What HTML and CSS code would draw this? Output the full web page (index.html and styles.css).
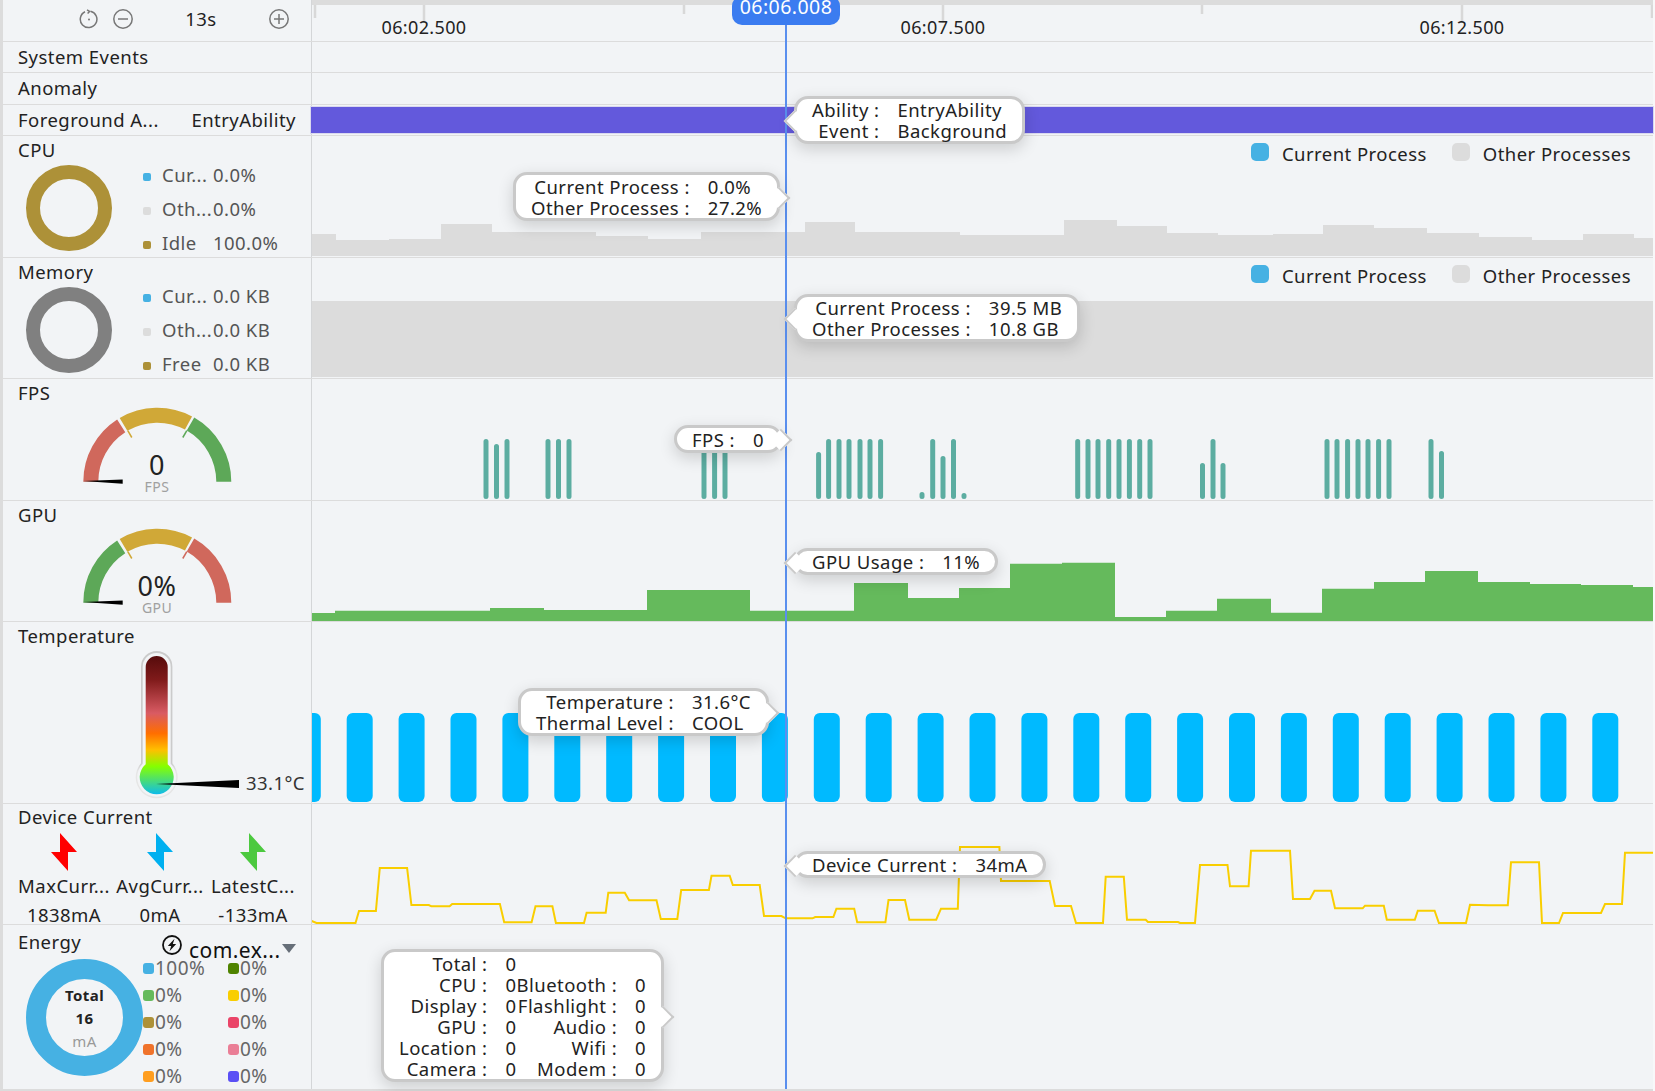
FILE: index.html
```html
<!DOCTYPE html>
<html lang="en">
<head>
    <meta charset="UTF-8">
    <title>Profiler timeline</title>
    <link rel="stylesheet" href="styles.css">
</head>
<body>
    <div class="app">
        <!-- time ruler -->
        <div class="row row-head">
            <div class="label zoom-bar">
                <svg class="zoom-icon" viewBox="0 0 20 20"><path d="M11.5 2.2A8.3 8.3 0 1 1 6 2.8"/><path d="M8 0.8L10.6 2.4L8.6 4.6"/><circle class="dot" cx="10" cy="10.5" r="1"/></svg>
                <svg class="zoom-icon zoom-minus" viewBox="0 0 20 20"><circle cx="10" cy="10" r="9.2"/><path d="M5 10H15"/></svg>
                <span class="zoom-value">13s</span>
                <svg class="zoom-icon" viewBox="0 0 20 20"><circle cx="10" cy="10" r="9.2"/><path d="M5 10H15M10 5V15"/></svg>
            </div>
            <div class="track ruler">
                <svg class="chart" viewBox="312 5 1341 36">
                    <path class="ticks" d="M315 5V18M424 5V23M684 5V14M943 5V23M1202 5V14M1462 5V23M1652 5V18"/>
                    <text class="time" x="424" y="34">06:02.500</text>
                    <text class="time" x="943" y="34">06:07.500</text>
                    <text class="time" x="1462" y="34">06:12.500</text>
                </svg>
            </div>
        </div>

        <div class="row row-sys">
            <div class="label label-line">System Events</div>
            <div class="track"></div>
        </div>

        <div class="row row-anomaly">
            <div class="label label-line">Anomaly</div>
            <div class="track"></div>
        </div>

        <div class="row row-fg">
            <div class="label label-line label-split"><span>Foreground A...</span><span>EntryAbility</span></div>
            <div class="track">
                <div class="fg-bar"></div>
                <div class="tip tip-left tip-ability">
                    <span>Ability :</span><span>EntryAbility</span>
                    <span>Event :</span><span>Background</span>
                </div>
            </div>
        </div>

        <div class="row row-cpu">
            <div class="label label-usage">
                <div class="title">CPU</div>
                <div class="donut donut-idle"></div>
                <ul class="usage">
                    <li><i class="sq c-blue"></i><span class="usage-name">Cur...</span><span>0.0%</span></li>
                    <li><i class="sq c-grey"></i><span class="usage-name">Oth...</span><span>0.0%</span></li>
                    <li><i class="sq c-olive"></i><span class="usage-name">Idle</span><span>100.0%</span></li>
                </ul>
            </div>
            <div class="track">
                <svg class="chart" viewBox="312 136 1341 121">
                    <path class="area-grey" d="M312 256V234H336V240H389V239H441V224H492V232H596V236H648V239H701V232H805V222H855V232H960V235H1064V220H1117V226H1167V233H1218V235H1273V234H1323V225H1374V228H1427V233H1479V237H1532V240H1583V234H1634V238H1653V256Z"/>
                </svg>
                <div class="legend">
                    <span class="legend-item"><i class="c-blue"></i>Current Process</span>
                    <span class="legend-item"><i class="c-grey"></i>Other Processes</span>
                </div>
                <div class="tip tip-right tip-cpu">
                    <span>Current Process :</span><span>0.0%</span>
                    <span>Other Processes :</span><span>27.2%</span>
                </div>
            </div>
        </div>

        <div class="row row-mem">
            <div class="label label-usage">
                <div class="title">Memory</div>
                <div class="donut donut-mem"></div>
                <ul class="usage">
                    <li><i class="sq c-blue"></i><span class="usage-name">Cur...</span><span>0.0 KB</span></li>
                    <li><i class="sq c-grey"></i><span class="usage-name">Oth...</span><span>0.0 KB</span></li>
                    <li><i class="sq c-olive"></i><span class="usage-name">Free</span><span>0.0 KB</span></li>
                </ul>
            </div>
            <div class="track">
                <svg class="chart" viewBox="312 258 1341 120">
                    <path class="area-grey" d="M312 301H1653V377H312Z"/>
                </svg>
                <div class="legend">
                    <span class="legend-item"><i class="c-blue"></i>Current Process</span>
                    <span class="legend-item"><i class="c-grey"></i>Other Processes</span>
                </div>
                <div class="tip tip-left tip-mem">
                    <span>Current Process :</span><span>39.5 MB</span>
                    <span>Other Processes :</span><span>10.8 GB</span>
                </div>
            </div>
        </div>

        <div class="row row-fps">
            <div class="label label-stack">
                <svg class="chart" viewBox="3 379 308 121">
                    <path class="arc a-red" d="M90.8 481.7A66.5 66.5 0 0 1 121.2 425.9"/>
                    <path class="arc a-yellow" d="M123.5 424.4A66.5 66.5 0 0 1 188.5 423"/>
                    <path class="arc a-green" d="M190.5 424.1A66.5 66.5 0 0 1 223.8 481.7"/>
                    <path class="gauge-tick a-yellow" d="M127.8 430.6L131.8 437.5"/>
                    <path class="gauge-tick a-green" d="M186.8 430.6L182.8 437.5"/>
                    <polygon class="needle" points="83,481 122.7,479.5 122.7,483.7"/>
                    <text class="gauge-value" x="157" y="475">0</text>
                    <text class="gauge-unit" x="157" y="492">FPS</text>
                </svg>
                <div class="title">FPS</div>
            </div>
            <div class="track">
                <svg class="chart" viewBox="312 379 1341 121">
                    <path class="fps-bars" d="M486 496.5V441.5M496.5 496.5V446.5M507 496.5V441.5M548 496.5V441.5M558.5 496.5V441.5M569 496.5V441.5M704 496.5V441.5M714.6 496.5V441.5M725 496.5V441.5M818.6 496.5V454.5M828.6 496.5V441.5M839 496.5V441.5M849 496.5V441.5M860 496.5V441.5M870 496.5V441.5M880.6 496.5V441.5M922 496.5V494.5M932.7 496.5V441.5M943 496.5V458.5M953.5 496.5V441.5M964 496.5V495.5M1077.7 496.5V441.5M1088 496.5V441.5M1098 496.5V441.5M1108.7 496.5V441.5M1119 496.5V441.5M1129.4 496.5V441.5M1139.7 496.5V441.5M1150 496.5V441.5M1202.5 496.5V465.5M1213 496.5V441.5M1223 496.5V465.5M1327 496.5V441.5M1337 496.5V441.5M1347.6 496.5V441.5M1358 496.5V441.5M1368 496.5V441.5M1378.6 496.5V441.5M1389 496.5V441.5M1431 496.5V441.5M1441.5 496.5V453.5"/>
                </svg>
                <div class="tip tip-right tip-fps">
                    <span>FPS :</span><span>0</span>
                </div>
            </div>
        </div>

        <div class="row row-gpu">
            <div class="label label-stack">
                <svg class="chart" viewBox="3 380 308 120">
                    <path class="arc a-green" d="M90.8 481.7A66.5 66.5 0 0 1 121.2 425.9"/>
                    <path class="arc a-yellow" d="M123.5 424.4A66.5 66.5 0 0 1 188.5 423"/>
                    <path class="arc a-red" d="M190.5 424.1A66.5 66.5 0 0 1 223.8 481.7"/>
                    <path class="gauge-tick a-yellow" d="M127.8 430.6L131.8 437.5"/>
                    <path class="gauge-tick a-red" d="M186.8 430.6L182.8 437.5"/>
                    <polygon class="needle" points="83,481 122.7,479.5 122.7,483.7"/>
                    <text class="gauge-value" x="157" y="475">0%</text>
                    <text class="gauge-unit" x="157" y="492">GPU</text>
                </svg>
                <div class="title">GPU</div>
            </div>
            <div class="track">
                <svg class="chart" viewBox="312 501 1341 120">
                    <path class="area-green" d="M312 621V613H335V610.7H490V608H544V610H647V590H750V610.7H854V583H908V598H959V588H1010V563.7H1062V562.7H1115V617H1166V610.7H1217V598.7H1271V612.7H1322V588.7H1374V582H1425V571H1478V582H1530V584H1581V585H1633V587H1653V621Z"/>
                </svg>
                <div class="tip tip-left tip-gpu">
                    <span>GPU Usage :</span><span>11%</span>
                </div>
            </div>
        </div>

        <div class="row row-temp">
            <div class="label label-stack">
                <svg class="chart" viewBox="3 622 308 181">
                    <defs>
                        <linearGradient id="thermoFill" gradientUnits="userSpaceOnUse" x1="0" y1="656" x2="0" y2="794">
                            <stop offset="0" stop-color="#560c0c"/>
                            <stop offset="0.17" stop-color="#7f1a1a"/>
                            <stop offset="0.415" stop-color="#d95b63"/>
                            <stop offset="0.56" stop-color="#ff6e00"/>
                            <stop offset="0.68" stop-color="#ffbf00"/>
                            <stop offset="0.8" stop-color="#85ff00"/>
                            <stop offset="1" stop-color="#0fbce8"/>
                        </linearGradient>
                        <linearGradient id="thermoEdge" gradientUnits="userSpaceOnUse" x1="0" y1="651" x2="0" y2="798">
                            <stop offset="0.76" stop-color="#cbcbcb"/>
                            <stop offset="0.82" stop-color="#e6e6e6"/>
                        </linearGradient>
                    </defs>
                    <path fill="url(#thermoEdge)" d="M141 763.3V666.7A15.7 15.7 0 0 1 172.4 666.7V763.3A21 21 0 1 1 141 763.3Z"/>
                    <path class="thermo-gap" d="M142.7 763.7V667A14 14 0 0 1 170.7 667V763.7A19.5 19.5 0 1 1 142.7 763.7Z"/>
                    <path fill="url(#thermoFill)" d="M145.7 764.3V667A11 11 0 0 1 167.7 667V764.3A17 17 0 1 1 145.7 764.3Z"/>
                    <polygon class="needle" points="156,784 239,780 239,788"/>
                    <text class="thermo-value" x="246" y="790">33.1°C</text>
                </svg>
                <div class="title">Temperature</div>
            </div>
            <div class="track">
                <svg class="chart" viewBox="312 622 1341 181">
                    <g class="temp-bars">
                        <rect x="294.8" y="713" width="26" height="89" rx="6"/>
                        <rect x="346.7" y="713" width="26" height="89" rx="6"/>
                        <rect x="398.6" y="713" width="26" height="89" rx="6"/>
                        <rect x="450.5" y="713" width="26" height="89" rx="6"/>
                        <rect x="502.4" y="713" width="26" height="89" rx="6"/>
                        <rect x="554.3" y="713" width="26" height="89" rx="6"/>
                        <rect x="606.2" y="713" width="26" height="89" rx="6"/>
                        <rect x="658.1" y="713" width="26" height="89" rx="6"/>
                        <rect x="710" y="713" width="26" height="89" rx="6"/>
                        <rect x="761.9" y="713" width="26" height="89" rx="6"/>
                        <rect x="813.8" y="713" width="26" height="89" rx="6"/>
                        <rect x="865.7" y="713" width="26" height="89" rx="6"/>
                        <rect x="917.6" y="713" width="26" height="89" rx="6"/>
                        <rect x="969.5" y="713" width="26" height="89" rx="6"/>
                        <rect x="1021.4" y="713" width="26" height="89" rx="6"/>
                        <rect x="1073.3" y="713" width="26" height="89" rx="6"/>
                        <rect x="1125.2" y="713" width="26" height="89" rx="6"/>
                        <rect x="1177.1" y="713" width="26" height="89" rx="6"/>
                        <rect x="1229" y="713" width="26" height="89" rx="6"/>
                        <rect x="1280.9" y="713" width="26" height="89" rx="6"/>
                        <rect x="1332.8" y="713" width="26" height="89" rx="6"/>
                        <rect x="1384.7" y="713" width="26" height="89" rx="6"/>
                        <rect x="1436.6" y="713" width="26" height="89" rx="6"/>
                        <rect x="1488.5" y="713" width="26" height="89" rx="6"/>
                        <rect x="1540.4" y="713" width="26" height="89" rx="6"/>
                        <rect x="1592.3" y="713" width="26" height="89" rx="6"/>
                    </g>
                </svg>
                <div class="tip tip-right tip-temp">
                    <span>Temperature :</span><span>31.6°C</span>
                    <span>Thermal Level :</span><span>COOL</span>
                </div>
            </div>
        </div>

        <div class="row row-current">
            <div class="label label-current">
                <div class="title">Device Current</div>
                <div class="current-cols">
                    <div class="current-col">
                        <svg class="bolt bolt-red" viewBox="0 0 26 38"><path d="M9 0L26 19H17V38L0 19H9Z"/></svg>
                        <span>MaxCurr...</span><span>1838mA</span>
                    </div>
                    <div class="current-col">
                        <svg class="bolt bolt-blue" viewBox="0 0 26 38"><path d="M9 0L26 19H17V38L0 19H9Z"/></svg>
                        <span>AvgCurr...</span><span>0mA</span>
                    </div>
                    <div class="current-col current-col-last">
                        <svg class="bolt bolt-green" viewBox="0 0 26 38"><path d="M9 0L26 19H17V38L0 19H9Z"/></svg>
                        <span>LatestC...</span><span>-133mA</span>
                    </div>
                </div>
            </div>
            <div class="track">
                <svg class="chart" viewBox="312 804 1341 120">
                    <path class="current-line" d="M310.8 920.7L316.5 923H355.5L359 911H375.9L379.8 868H407.1L411.4 905H428.8L431.4 906.3H449.6L452.2 904H499.9L504.2 922.3H531.6L535.5 906.3H552.4L555.9 923H584L586.6 912.7H605.7L608.3 892.7H624.8L629.1 900.3H656.5L660.8 919H677.3L681.2 890H708.9L711.5 875.7H729.7L732.8 885H759.7L764 916H781.4L785.7 918.3H812.6L815.2 917H833.4L836.4 908.7H854.2L857.2 922.3H885.4L888.5 900H905L909.3 919.7H936.2L941 908.7H957.8L960 847H999.4L1001 881H1049.7L1055 906H1071L1076 923H1103L1105.7 876.7H1123.8L1127 919.7H1145.7L1148 922H1178L1180 923H1195L1200 865H1227.5L1230 886.3H1248.6L1251 850.7H1290L1293 899H1310L1314.5 890.7H1331L1335 908.3H1362.7L1365 905.7H1383.8L1386.8 919.7H1414.8L1417.8 910.7H1434.6L1438.9 923H1466L1470 904.7L1488 905.3H1507.8L1511 862.3H1539L1542 923H1559L1563 913H1601L1605 904H1622L1625 852.7H1653"/>
                </svg>
                <div class="tip tip-left tip-current">
                    <span>Device Current :</span><span>34mA</span>
                </div>
            </div>
        </div>

        <div class="row row-energy">
            <div class="label label-energy">
                <div class="title">Energy</div>
                <div class="app-pick">
                    <svg class="pick-icon" viewBox="0 0 20 20"><circle cx="10" cy="10" r="9"/><path class="pick-bolt" d="M12.5 3.8L5.8 11H9.2L7.5 16.2L14.2 9H10.8Z"/></svg>
                    <span class="pick-name">com.ex...</span>
                    <i class="pick-caret"></i>
                </div>
                <div class="donut donut-energy">
                    <b>Total</b>
                    <b>16</b>
                    <span>mA</span>
                </div>
                <ul class="energy-list">
                    <li><i class="c-blue"></i>100%</li>
                    <li><i class="c-moss"></i>0%</li>
                    <li><i class="c-green"></i>0%</li>
                    <li><i class="c-yellow"></i>0%</li>
                    <li><i class="c-olive"></i>0%</li>
                    <li><i class="c-rose"></i>0%</li>
                    <li><i class="c-orange"></i>0%</li>
                    <li><i class="c-pink"></i>0%</li>
                    <li><i class="c-amber"></i>0%</li>
                    <li><i class="c-violet"></i>0%</li>
                </ul>
            </div>
            <div class="track">
                <div class="tip tip-right tip-energy">
                    <span>Total :</span><span class="val">0</span><span></span><span></span>
                    <span>CPU :</span><span class="val">0</span><span>Bluetooth :</span><span class="val">0</span>
                    <span>Display :</span><span class="val">0</span><span>Flashlight :</span><span class="val">0</span>
                    <span>GPU :</span><span class="val">0</span><span>Audio :</span><span class="val">0</span>
                    <span>Location :</span><span class="val">0</span><span>Wifi :</span><span class="val">0</span>
                    <span>Camera :</span><span class="val">0</span><span>Modem :</span><span class="val">0</span>
                </div>
            </div>
        </div>

        <div class="cursor"><span class="cursor-time">06:06.008</span></div>
    </div>
</body>
</html>
```

FILE: styles.css
```css
* {
    box-sizing: border-box;
}
body {
    margin: 0;
    background: #f8f8f9;
    font-family: "Noto Sans", sans-serif;
    font-size: 18.5px;
    letter-spacing: 0.45px;
    color: #222;
    overflow: hidden;
}
ul {
    list-style: none;
    margin: 0;
    padding: 0;
}
.app {
    position: relative;
    width: 1653px;
    height: 1091px;
    background: #f2f4f6;
    border-bottom: 2px solid #dcdcdc;
}
.row {
    display: flex;
    border-bottom: 1px solid #dcdcdc;
}
.row-head { height: 42px; }
.row-sys { height: 31px; }
.row-anomaly { height: 32px; }
.row-fg { height: 31px; }
.row-cpu { height: 122px; }
.row-mem { height: 121px; }
.row-fps { height: 122px; }
.row-gpu { height: 121px; }
.row-temp { height: 182px; }
.row-current { height: 121px; }
.row-energy { height: 164px; border-bottom: 0; }

.label {
    flex: none;
    width: 312px;
    padding-left: 15px;
    border-left: 3px solid #dcdcdc;
    border-right: 1px solid #d4d6d8;
}
.track {
    position: relative;
    flex: 1;
    display: grid;
    min-width: 0;
}
.track > * {
    grid-area: 1 / 1;
}
.chart {
    display: block;
    width: 100%;
    height: 100%;
}
.title {
    line-height: 28px;
}

/* header */
.zoom-bar {
    display: flex;
    align-items: center;
    padding: 0 0 4px 76px;
}
.zoom-icon {
    width: 20px;
    height: 20px;
    fill: none;
    stroke: #777;
    stroke-width: 1.5;
}
.zoom-icon .dot {
    fill: #777;
    stroke: none;
}
.zoom-minus {
    margin-left: 14px;
}
.zoom-value {
    width: 136px;
    text-align: center;
}
.ruler {
    border-top: 5px solid #dcdcdc;
}
.ticks {
    fill: none;
    stroke: #d8d8d8;
    stroke-width: 2.5;
}
.time {
    font-size: 18px;
    letter-spacing: 0.35px;
    text-anchor: middle;
    fill: #222;
}

.label-line {
    display: flex;
    align-items: center;
    padding-bottom: 2px;
}
.label-split {
    justify-content: space-between;
    padding-right: 15px;
}
.fg-bar {
    height: 26px;
    margin: 2px 0 0 -1px;
    background: #6359dc;
    box-shadow: 0 0 0 1px #d9d8ee;
}

/* cpu and memory */
.label-usage {
    display: grid;
    grid-template-columns: 125px 1fr;
    grid-template-rows: 28px 1fr;
}
.label-usage .title {
    grid-area: 1 / 1;
}
.donut {
    border-radius: 50%;
    border: 14px solid;
}
.label-usage .donut {
    grid-area: 2 / 1;
    width: 86px;
    height: 86px;
    margin-left: 8px;
    margin-top: 1px;
}
.donut-idle { border-color: #ad9138; }
.donut-mem { border-color: #808080; }
.usage {
    grid-area: 1 / 2 / 3 / 3;
    padding-top: 21px;
    color: #555;
}
.row-mem .usage {
    padding-top: 20px;
}
.usage li {
    display: flex;
    align-items: center;
    height: 34px;
}
.sq {
    width: 8px;
    height: 8px;
    margin-top: 5px;
    margin-right: 11px;
    border-radius: 2px;
}
.usage-name {
    width: 51px;
}
.c-blue { background: #46b1e3; }
.c-grey { background: #dcdcdc; }
.c-olive { background: #ad9138; }
.c-green { background: #65ba5c; }
.c-moss { background: #4f8300; }
.c-yellow { background: #f9ce00; }
.c-rose { background: #ea4468; }
.c-orange { background: #f0732b; }
.c-pink { background: #ea7e96; }
.c-amber { background: #ff9e1f; }
.c-violet { background: #5a4ff5; }

.area-grey { fill: #dcdcdc; }
.area-green { fill: #65ba5c; }

.legend {
    display: flex;
    gap: 25px;
    justify-self: end;
    align-self: start;
    margin: 7px 22px 0 0;
    line-height: 22px;
}
.legend-item {
    display: flex;
    gap: 13px;
}
.legend-item i {
    width: 18px;
    height: 18px;
    border-radius: 5px;
}

/* gauges */
.label-stack {
    display: grid;
    padding-left: 0;
}
.label-stack > * {
    grid-area: 1 / 1;
}
.label-stack .title {
    padding-left: 15px;
    align-self: start;
}
.arc {
    fill: none;
    stroke-width: 15;
}
.gauge-tick {
    fill: none;
    stroke-width: 1.5;
}
.a-red { stroke: #d0685c; }
.a-yellow { stroke: #d0a837; }
.a-green { stroke: #5da858; }
.needle { fill: #000; }
.gauge-value {
    font-size: 27px;
    text-anchor: middle;
    fill: #222;
}
.gauge-unit {
    font-size: 14px;
    text-anchor: middle;
    fill: #a0a0a0;
}
.fps-bars {
    fill: none;
    stroke: #5cada1;
    stroke-width: 5;
    stroke-linecap: round;
}

/* temperature */
.thermo-gap { fill: #f2f4f6; }
.thermo-value {
    font-size: 18.5px;
    fill: #333;
}
.temp-bars { fill: #00baff; }

/* device current */
.label-current .title {
    line-height: 26px;
}
.current-cols {
    display: flex;
    margin-left: -2px;
}
.current-col {
    display: flex;
    flex-direction: column;
    align-items: center;
    flex: none;
    width: 96px;
    white-space: nowrap;
}
.current-col-last {
    width: 90px;
}
.current-col span {
    line-height: 29px;
}
.current-col span:first-of-type {
    margin-top: -1px;
}
.bolt {
    width: 26px;
    height: 38px;
    margin-top: 3px;
    margin-bottom: 1px;
}
.bolt-red { fill: #ff0000; }
.bolt-blue { fill: #00b0f0; }
.bolt-green { fill: #4cc93f; }
.current-line {
    fill: none;
    stroke: #f9ce00;
    stroke-width: 2;
}

/* energy */
.label-energy {
    display: grid;
    grid-template-columns: 125px 1fr;
    grid-template-rows: 31px 1fr;
    padding-top: 3px;
}
.app-pick {
    display: flex;
    align-items: center;
    margin-left: 19px;
    height: 32px;
}
.pick-icon {
    flex: none;
    width: 20px;
    height: 20px;
    margin-top: 2px;
    fill: none;
    stroke: #111;
    stroke-width: 1.8;
}
.pick-bolt {
    fill: #111;
    stroke: none;
}
.pick-name {
    margin: 12px 0 0 7px;
    font-size: 21px;
    color: #111;
    white-space: nowrap;
}
.pick-caret {
    width: 0;
    height: 0;
    margin: 8px 0 0 1px;
    border-left: 7px solid transparent;
    border-right: 7px solid transparent;
    border-top: 9px solid #666e78;
}
.donut-energy {
    display: flex;
    flex-direction: column;
    align-items: center;
    justify-content: center;
    width: 117px;
    height: 117px;
    margin-left: 8px;
    padding-top: 1px;
    border-width: 20px;
    border-color: #46b1e3;
    font-size: 15px;
    line-height: 23px;
}
.donut-energy span {
    color: #999;
}
.energy-list {
    display: grid;
    grid-template-columns: 85px 85px;
    grid-auto-rows: 27px;
    margin-top: -5px;
    font-size: 19px;
    color: #666;
}
.energy-list li {
    display: flex;
    align-items: center;
    gap: 1px;
}
.energy-list i {
    width: 11px;
    height: 11px;
    margin-top: 2px;
    border-radius: 3px;
}

/* tooltips */
.tip {
    position: absolute;
    z-index: 5;
    display: grid;
    grid-template-columns: auto auto;
    column-gap: 18px;
    padding: 0 15px;
    line-height: 21px;
    background: #fff;
    border: 3px solid #c9c9c9;
    border-radius: 14px;
    box-shadow: 0 5px 16px rgba(0, 0, 0, 0.16);
    white-space: nowrap;
}
.tip > span:nth-child(odd) {
    text-align: right;
}
.tip::after {
    content: "";
    position: absolute;
    top: 50%;
    width: 14px;
    height: 14px;
    margin-top: -7px;
    background: #fff;
    border: 0 solid #c9c9c9;
    transform: rotate(45deg);
}
.tip-left::after {
    left: -10px;
    border-width: 0 0 2px 2px;
}
.tip-right::after {
    right: -10px;
    border-width: 2px 2px 0 0;
}
.tip-ability { left: 482px; top: -9px; }
.tip-cpu { left: 201px; top: 36px; padding-top: 1px; }
.tip-mem { left: 482px; top: 36px; }
.tip-fps { left: 362px; top: 46px; padding-top: 2px; line-height: 20px; }
.tip-gpu { left: 482px; top: 47px; }
.tip-temp { left: 206px; top: 66px; }
.tip-current { left: 482px; top: 47px; }
.tip-energy {
    left: 69px;
    top: 24px;
    padding-top: 1px;
    grid-template-columns: auto auto auto auto;
    column-gap: 0;
}
.tip-energy .val {
    padding-left: 18px;
}
.tip-energy > span:nth-child(4n + 3) {
    text-align: right;
}

/* time cursor */
.cursor {
    position: absolute;
    left: 785px;
    top: 25px;
    bottom: 0;
    width: 2px;
    background: #5a8fee;
    z-index: 4;
}
.cursor-time {
    position: absolute;
    left: -53px;
    top: -29px;
    width: 108px;
    height: 29px;
    border-radius: 10px;
    background: #3b7cf0;
    color: #fff;
    font-size: 19.5px;
    line-height: 21px;
    text-align: center;
}
```
